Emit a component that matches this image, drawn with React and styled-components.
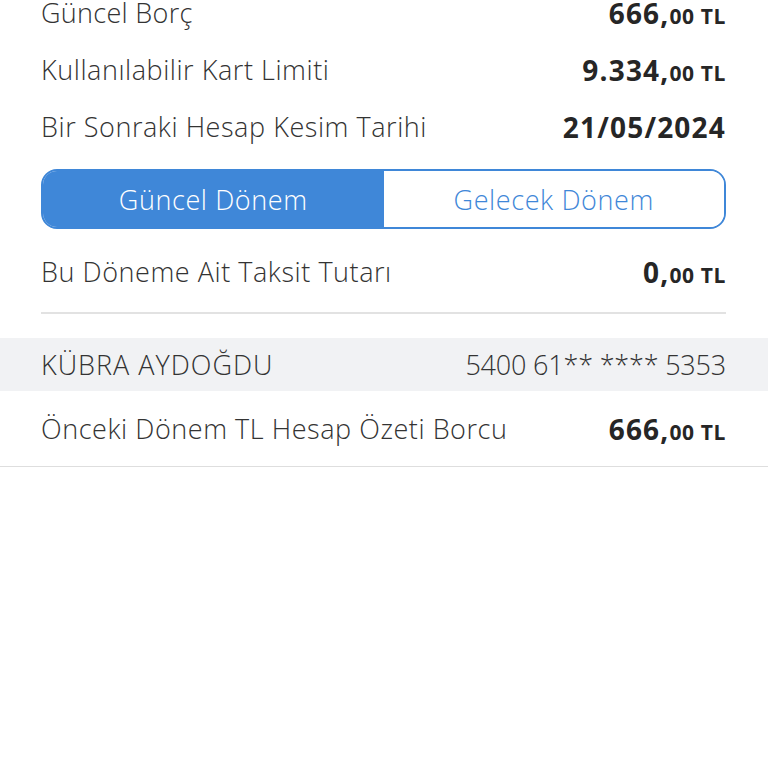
import React from 'react';
import styled, { createGlobalStyle } from 'styled-components';

const GlobalStyle = createGlobalStyle`
  html, body {
    margin: 0;
    padding: 0;
    background: #fff;
    overflow: hidden;
  }
  body {
    font-family: 'Open Sans', 'DejaVu Sans', sans-serif;
    color: #333;
  }
`;

const Page = styled.div`
  display: flex;
  flex-direction: column;
  margin-top: -16px;
`;

const Section = styled.div`
  padding: 0 42px 0 41px;
  display: flex;
  flex-direction: column;
`;

const Row = styled.div`
  display: flex;
  justify-content: space-between;
  align-items: center;
  height: ${(p) => p.height || 57}px;
`;

const Label = styled.span`
  font-size: 27px;
  font-weight: 300;
  letter-spacing: ${(p) => p.spacing ?? 0.55}px;
  color: #333;
`;

const Amount = styled.span`
  font-size: 28px;
  font-weight: 700;
  letter-spacing: 1.2px;
  color: #262626;
`;

const Small = styled.span`
  font-size: 21px;
  font-weight: 700;
  letter-spacing: 0.6px;
`;

const Segmented = styled.div`
  display: flex;
  height: 60px;
  margin: 14px 0;
  border: 2px solid #3f87d8;
  border-radius: 16px;
  overflow: hidden;
  box-sizing: border-box;
`;

const Segment = styled.div`
  flex: 1;
  display: flex;
  align-items: center;
  justify-content: center;
  font-size: 27px;
  font-weight: 300;
  letter-spacing: 0.6px;
  background: ${(p) => (p.active ? '#3f87d8' : '#fff')};
  color: ${(p) => (p.active ? '#fff' : '#3f87d8')};
`;

const Divider = styled.div`
  height: 2px;
  background: #e2e2e2;
  margin-top: 12px;
`;

const CardBand = styled.div`
  margin-top: 24px;
  height: 53px;
  background: #f1f2f4;
  padding: 0 42px 0 41px;
  display: flex;
  justify-content: space-between;
  align-items: center;
`;

const FullDivider = styled.div`
  height: 1px;
  background: #dedede;
`;

const Money = ({ whole, cents = '00' }) => (
  <Amount>
    {whole},<Small>{cents} TL</Small>
  </Amount>
);

export default function App() {
  return (
    <>
      <GlobalStyle />
      <Page>
        <Section>
          <Row>
            <Label spacing={0.3}>Güncel Borç</Label>
            <Money whole="666" />
          </Row>
          <Row>
            <Label>Kullanılabilir Kart Limiti</Label>
            <Money whole="9.334" />
          </Row>
          <Row>
            <Label>Bir Sonraki Hesap Kesim Tarihi</Label>
            <Amount>21/05/2024</Amount>
          </Row>
          <Segmented>
            <Segment active>Güncel Dönem</Segment>
            <Segment>Gelecek Dönem</Segment>
          </Segmented>
          <Row>
            <Label>Bu Döneme Ait Taksit Tutarı</Label>
            <Money whole="0" />
          </Row>
          <Divider />
        </Section>
        <CardBand>
          <Label spacing={1}>KÜBRA AYDOĞDU</Label>
          <Label spacing={-0.2}>5400 61** **** 5353</Label>
        </CardBand>
        <Section>
          <Row height={75}>
            <Label>Önceki Dönem TL Hesap Özeti Borcu</Label>
            <Money whole="666" />
          </Row>
        </Section>
        <FullDivider />
      </Page>
    </>
  );
}
